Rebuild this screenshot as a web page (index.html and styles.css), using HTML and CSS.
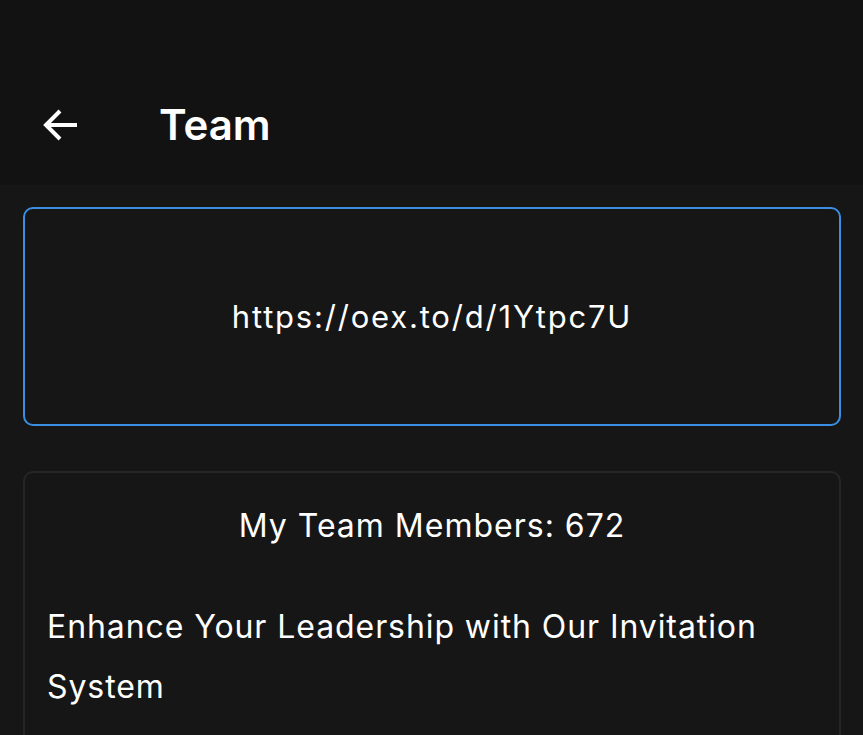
FILE: index.html
```html
<!DOCTYPE html>
<html>
<head>
<meta charset="utf-8">
<link rel="stylesheet" href="styles.css">
</head>
<body>
<header class="appbar">
  <button class="back" aria-label="Back">
    <svg width="36" height="36" viewBox="0 0 36 36"><path d="M34 18H3M17 4L3 18l14 14" fill="none" stroke="#fff" stroke-width="4"/></svg>
  </button>
  <h1 class="title">Team</h1>
</header>
<main class="content">
  <section class="link-card">
    <span class="link">https://oex.to/d/1Ytpc7U</span>
  </section>
  <section class="info-card">
    <p class="members">My Team Members: 672</p>
    <p class="headline">Enhance Your Leadership with Our Invitation System</p>
  </section>
</main>
</body>
</html>
```
FILE: styles.css
```css
* { box-sizing: border-box; }
html, body { margin: 0; padding: 0; }
body {
  background: #161616;
  color: #ffffff;
  font-family: Inter, "Noto Sans", sans-serif;
  width: 863px;
  height: 735px;
  overflow: hidden;
}
.appbar {
  background: #121212;
  height: 185px;
  display: flex;
  align-items: center;
  padding: 64px 0 0 43px;
}
.back {
  background: none;
  border: 0;
  padding: 0;
  width: 36px;
  height: 36px;
  display: flex;
}
.title {
  margin: 0 0 0 80px;
  font-size: 42px;
  font-weight: 600;
  line-height: 1;
}
.content {
  padding: 22px 22px 0 23px;
  display: flex;
  flex-direction: column;
  gap: 45px;
}
.link-card {
  height: 219px;
  border: 2px solid #3a8fe2;
  border-radius: 10px;
  display: flex;
  align-items: center;
  justify-content: center;
}
.link {
  font-size: 31px;
  letter-spacing: 1.8px;
}
.info-card {
  border: 2px solid #262626;
  border-radius: 10px;
  padding: 28px 22px 40px;
}
.members {
  margin: 0;
  text-align: center;
  font-size: 32px;
  letter-spacing: 1px;
  line-height: 50px;
}
.headline {
  margin: 46px 0 0;
  font-size: 32px;
  letter-spacing: 0.92px;
  line-height: 60px;
}
```
